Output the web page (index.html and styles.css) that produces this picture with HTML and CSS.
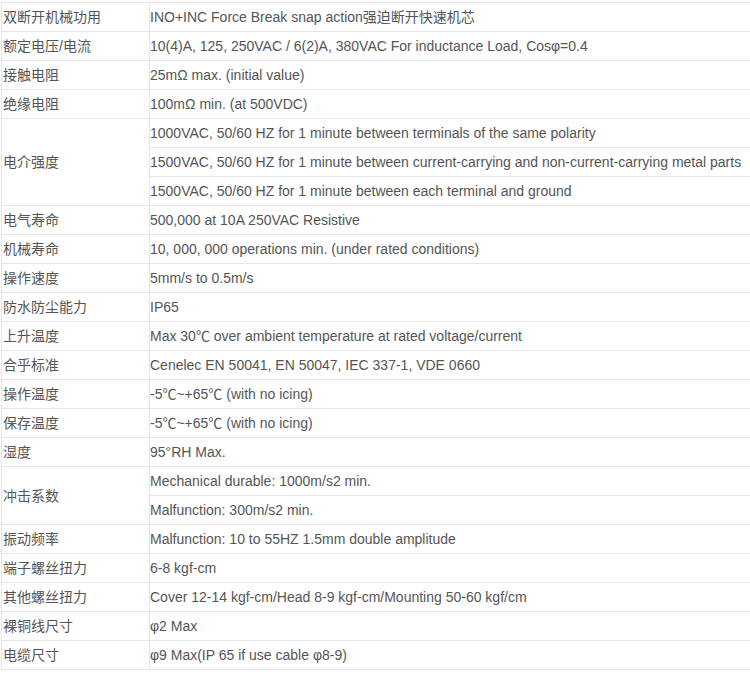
FILE: index.html
```html
<!DOCTYPE html>
<html lang="zh-CN">
<head>
    <meta charset="UTF-8">
    <title>规格参数</title>
    <link rel="stylesheet" href="styles.css">
</head>
<body>
    <table class="spec-table">
        <tr><td class="spec-name">双断开机械功用</td><td>INO+INC Force Break snap action强迫断开快速机芯</td></tr>
        <tr><td class="spec-name">额定电压/电流</td><td>10(4)A, 125, 250VAC / 6(2)A, 380VAC For inductance Load, Cosφ=0.4</td></tr>
        <tr><td class="spec-name">接触电阻</td><td>25mΩ max. (initial value)</td></tr>
        <tr><td class="spec-name">绝缘电阻</td><td>100mΩ min. (at 500VDC)</td></tr>
        <tr><td class="spec-name" rowspan="3">电介强度</td><td>1000VAC, 50/60 HZ for 1 minute between terminals of the same polarity</td></tr>
        <tr><td>1500VAC, 50/60 HZ for 1 minute between current-carrying and non-current-carrying metal parts</td></tr>
        <tr><td>1500VAC, 50/60 HZ for 1 minute between each terminal and ground</td></tr>
        <tr><td class="spec-name">电气寿命</td><td>500,000 at 10A 250VAC Resistive</td></tr>
        <tr><td class="spec-name">机械寿命</td><td>10, 000, 000 operations min. (under rated conditions)</td></tr>
        <tr><td class="spec-name">操作速度</td><td>5mm/s to 0.5m/s</td></tr>
        <tr><td class="spec-name">防水防尘能力</td><td>IP65</td></tr>
        <tr><td class="spec-name">上升温度</td><td>Max 30℃ over ambient temperature at rated voltage/current</td></tr>
        <tr><td class="spec-name">合乎标准</td><td>Cenelec EN 50041, EN 50047, IEC 337-1, VDE 0660</td></tr>
        <tr><td class="spec-name">操作温度</td><td>-5℃~+65℃ (with no icing)</td></tr>
        <tr><td class="spec-name">保存温度</td><td>-5℃~+65℃ (with no icing)</td></tr>
        <tr><td class="spec-name">湿度</td><td>95°RH Max.</td></tr>
        <tr><td class="spec-name" rowspan="2">冲击系数</td><td>Mechanical durable: 1000m/s2 min.</td></tr>
        <tr><td>Malfunction: 300m/s2 min.</td></tr>
        <tr><td class="spec-name">振动频率</td><td>Malfunction: 10 to 55HZ 1.5mm double amplitude</td></tr>
        <tr><td class="spec-name">端子螺丝扭力</td><td>6-8 kgf-cm</td></tr>
        <tr><td class="spec-name">其他螺丝扭力</td><td>Cover 12-14 kgf-cm/Head 8-9 kgf-cm/Mounting 50-60 kgf/cm</td></tr>
        <tr><td class="spec-name">裸铜线尺寸</td><td>φ2 Max</td></tr>
        <tr><td class="spec-name">电缆尺寸</td><td>φ9 Max(IP 65 if use cable φ8-9)</td></tr>
    </table>
</body>
</html>
```

FILE: styles.css
```css
* {
    box-sizing: border-box;
}

html, body {
    margin: 0;
    padding: 0;
    overflow: hidden;
    background-color: #fff;
}

body {
    font-family: 'Liberation Sans', Arial, 'Noto Sans CJK SC', sans-serif;
    font-size: 14px;
    color: #555;
}

.spec-table {
    border-collapse: collapse;
    width: 770px;
    margin: 2px 0 0 1px;
    table-layout: fixed;
}

.spec-table td {
    border: 1px solid #e6e6e6;
    height: 29px;
    padding: 0 1px 0 0;
    line-height: 20px;
    vertical-align: middle;
    white-space: nowrap;
}

.spec-table .spec-name {
    width: 148px;
    padding-left: 1px;
}
```
